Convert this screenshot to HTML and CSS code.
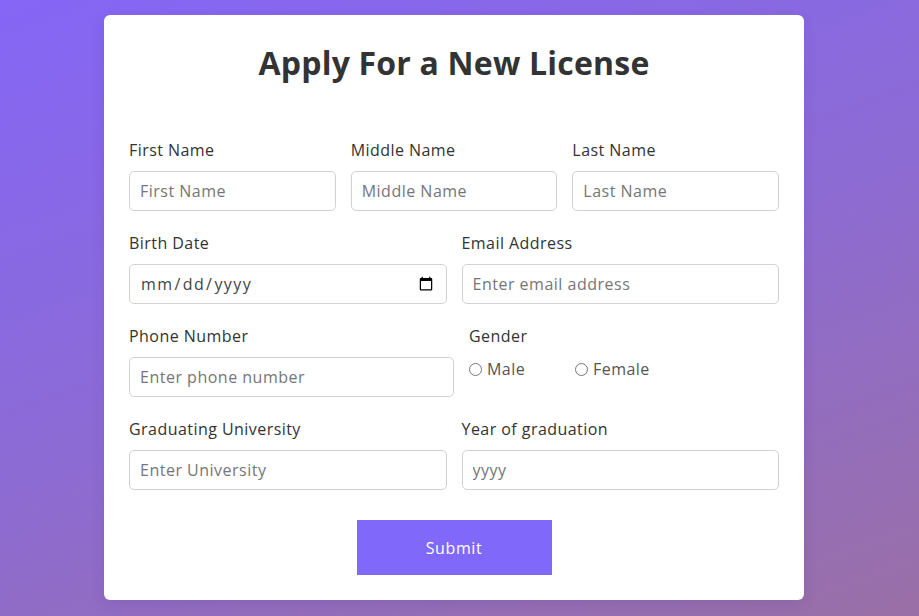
FILE: index.html
```html
<!DOCTYPE html>
<html lang="en">
<head>
<meta charset="utf-8">
<title>Apply For a New License</title>
<link rel="stylesheet" href="styles.css">
</head>
<body>
<div class="page">
  <form class="card">
    <h1 class="title">Apply For a New License</h1>
    <div class="row row-3">
      <div class="field">
        <label class="label">First Name</label>
        <input class="input" type="text" placeholder="First Name">
      </div>
      <div class="field">
        <label class="label">Middle Name</label>
        <input class="input" type="text" placeholder="Middle Name">
      </div>
      <div class="field">
        <label class="label">Last Name</label>
        <input class="input" type="text" placeholder="Last Name">
      </div>
    </div>
    <div class="row row-2">
      <div class="field">
        <label class="label">Birth Date</label>
        <input class="input input-date" type="date">
      </div>
      <div class="field">
        <label class="label">Email Address</label>
        <input class="input" type="email" placeholder="Enter email address">
      </div>
    </div>
    <div class="row row-phone">
      <div class="field">
        <label class="label">Phone Number</label>
        <input class="input" type="tel" placeholder="Enter phone number">
      </div>
      <div class="field">
        <span class="label">Gender</span>
        <div class="radios">
          <label class="radio"><input type="radio" name="gender" class="radio-input"><span>Male</span></label>
          <label class="radio"><input type="radio" name="gender" class="radio-input"><span>Female</span></label>
        </div>
      </div>
    </div>
    <div class="row row-2">
      <div class="field">
        <label class="label">Graduating University</label>
        <input class="input" type="text" placeholder="Enter University">
      </div>
      <div class="field">
        <label class="label">Year of graduation</label>
        <input class="input" type="text" placeholder="yyyy">
      </div>
    </div>
    <div class="actions">
      <button class="submit" type="button">Submit</button>
    </div>
  </form>
</div>
</body>
</html>
```

FILE: styles.css
```css
* { box-sizing: border-box; }
html, body { margin: 0; padding: 0; }
body {
  font-family: "Open Sans", "Noto Sans", sans-serif;
  background: linear-gradient(160deg, #8566f6 0%, #8c6bd4 50%, #9a6fa6 100%);
  min-height: 616px;
  color: #333;
}
.page {
  min-height: 616px;
  display: flex;
  align-items: flex-start;
  justify-content: center;
  padding: 15px 11px 0 0;
}
.card {
  width: 700px;
  height: 585px;
  background: #fff;
  border-radius: 6px;
  padding: 24px 25px 25px;
  box-shadow: 0 4px 14px rgba(60, 30, 120, 0.12);
}
.title {
  margin: 0 0 52px;
  text-align: center;
  font-size: 32px;
  line-height: 48px;
  font-weight: 700;
  color: #333;
  letter-spacing: 0.2px;
}
.row {
  display: grid;
  column-gap: 15px;
  margin-bottom: 21px;
}
.row-3 { grid-template-columns: 1fr 1fr 1fr; }
.row-2 { grid-template-columns: 1fr 1fr; }
.row-phone { grid-template-columns: 325px 1fr; }
.field { display: flex; flex-direction: column; }
.label {
  display: block;
  font-size: 16px;
  line-height: 22px;
  letter-spacing: 0.45px;
  margin-bottom: 10px;
  color: #333;
}
.input {
  height: 40px;
  width: 100%;
  border: 1px solid #d2d2d2;
  border-radius: 5px;
  padding: 0 10px;
  font-family: inherit;
  font-size: 16px;
  letter-spacing: 0.5px;
  color: #333;
  outline: none;
  background: #fff;
}
.input::placeholder { color: #767676; }
.input-date { color: #444; letter-spacing: 1.4px; }
.radios {
  display: flex;
  align-items: center;
  height: 22px;
  margin-top: 1px;
}
.radio {
  width: 106px;
  display: flex;
  align-items: center;
  font-size: 16px;
  letter-spacing: 0.45px;
  color: #555;
}
.radio-input {
  width: 13px;
  height: 13px;
  margin: 0 5px 0 0;
}
.actions {
  display: flex;
  justify-content: center;
  margin-top: 30px;
}
.submit {
  width: 195px;
  height: 55px;
  border: none;
  border-radius: 0;
  background: #8068fa;
  color: #fff;
  font-family: inherit;
  font-size: 16px;
  letter-spacing: 0.6px;
  cursor: pointer;
}
```
